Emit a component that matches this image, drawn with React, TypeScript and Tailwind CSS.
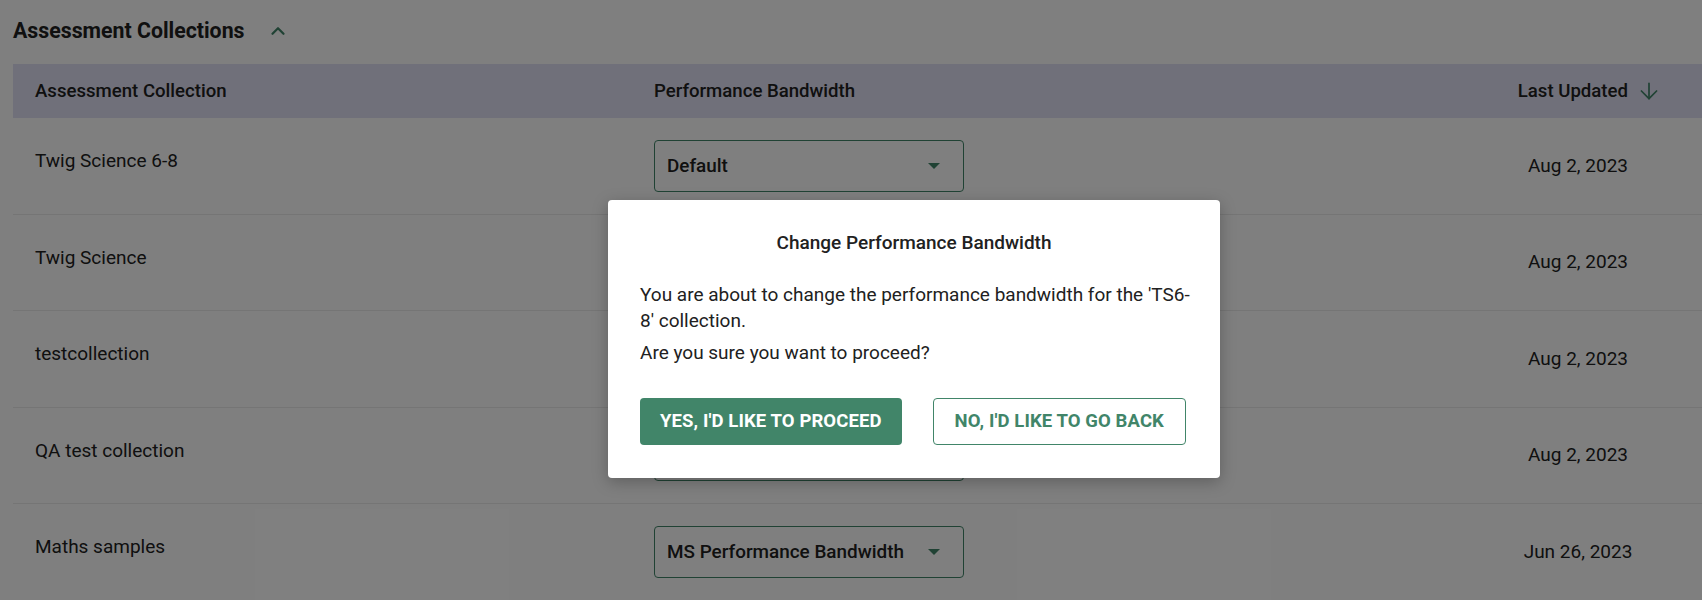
import { ChevronUp, ArrowDown } from 'lucide-react'

const rows = [
  { name: 'Twig Science 6-8', band: 'Default', date: 'Aug 2, 2023' },
  { name: 'Twig Science', band: 'Default', date: 'Aug 2, 2023' },
  { name: 'testcollection', band: 'Default', date: 'Aug 2, 2023' },
  { name: 'QA test collection', band: 'Default', date: 'Aug 2, 2023' },
  { name: 'Maths samples', band: 'MS Performance Bandwidth', date: 'Jun 26, 2023' },
]

function BandSelect({ value }: { value: string }) {
  return (
    <div className="flex h-[52px] w-[310px] items-center justify-between rounded-[4px] border border-[#418569] pl-[12px] pr-[23px]">
      <span className="text-[18.9px] font-medium text-[#212121]">{value}</span>
      <svg width="12" height="6" viewBox="0 0 12 6" className="shrink-0">
        <path d="M0 0h12L6 6z" fill="#418569" />
      </svg>
    </div>
  )
}

export default function App() {
  return (
    <div className="relative h-[600px] w-[1702px] overflow-hidden bg-white font-['Roboto',sans-serif] text-[#212121]">
      <div className="pl-[13px] pt-[17px]">
        <div className="flex h-[28px] items-center">
          <h2 className="text-[21.3px] font-bold leading-[28px]">Assessment Collections</h2>
          <ChevronUp className="ml-[22px] h-[22px] w-[22px] text-[#418569]" strokeWidth={2.5} />
        </div>

        <div className="mt-[19px]">
          <div className="grid h-[54px] grid-cols-[641px_1fr_248px] items-center bg-[#e0e1f4] pt-[1px] text-[18.6px] font-medium">
            <div className="pl-[22px]">Assessment Collection</div>
            <div>Performance Bandwidth</div>
            <div className="flex items-center justify-end pr-[40px]">
              Last Updated
              <ArrowDown className="ml-[8px] h-[26px] w-[26px] text-[#418569]" strokeWidth={1.6} />
            </div>
          </div>

          {rows.map((r) => (
            <div
              key={r.name}
              className="grid h-[96.5px] grid-cols-[641px_1fr_248px] items-center border-b border-[#ebebeb] text-[19px]"
            >
              <div className="self-start pl-[22px] pt-[31px] leading-[24px]">{r.name}</div>
              <div>
                <BandSelect value={r.band} />
              </div>
              <div className="text-center">{r.date}</div>
            </div>
          ))}
        </div>
      </div>

      {/* dim layer behind the confirm dialog */}
      <div className="absolute inset-0 bg-black/50" />

      <div className="absolute left-[608px] top-[200px] w-[612px] rounded-[4px] bg-white pb-[33px] pl-[32px] pr-[26px] pt-[31px] shadow-[0_4px_16px_rgba(0,0,0,0.25)]">
        <h3 className="pr-[6px] text-center text-[19px] font-medium leading-[24px]">Change Performance Bandwidth</h3>
        <p className="mt-[27px] text-[19px] leading-[26px]">
          You are about to change the performance bandwidth for the 'TS6-8' collection.
        </p>
        <p className="mt-[6px] text-[19px] leading-[26px]">Are you sure you want to proceed?</p>
        <div className="mt-[32px] flex gap-[31px]">
          <button className="h-[47px] rounded-[4px] bg-[#418569] px-[20px] text-[18.5px] font-bold uppercase tracking-[0.1px] text-white">
            Yes, I'd like to proceed
          </button>
          <button className="h-[47px] rounded-[4px] border border-[#418569] bg-white px-[21px] text-[18.5px] font-bold uppercase tracking-[0.1px] text-[#418569]">
            No, I'd like to go back
          </button>
        </div>
      </div>
    </div>
  )
}
